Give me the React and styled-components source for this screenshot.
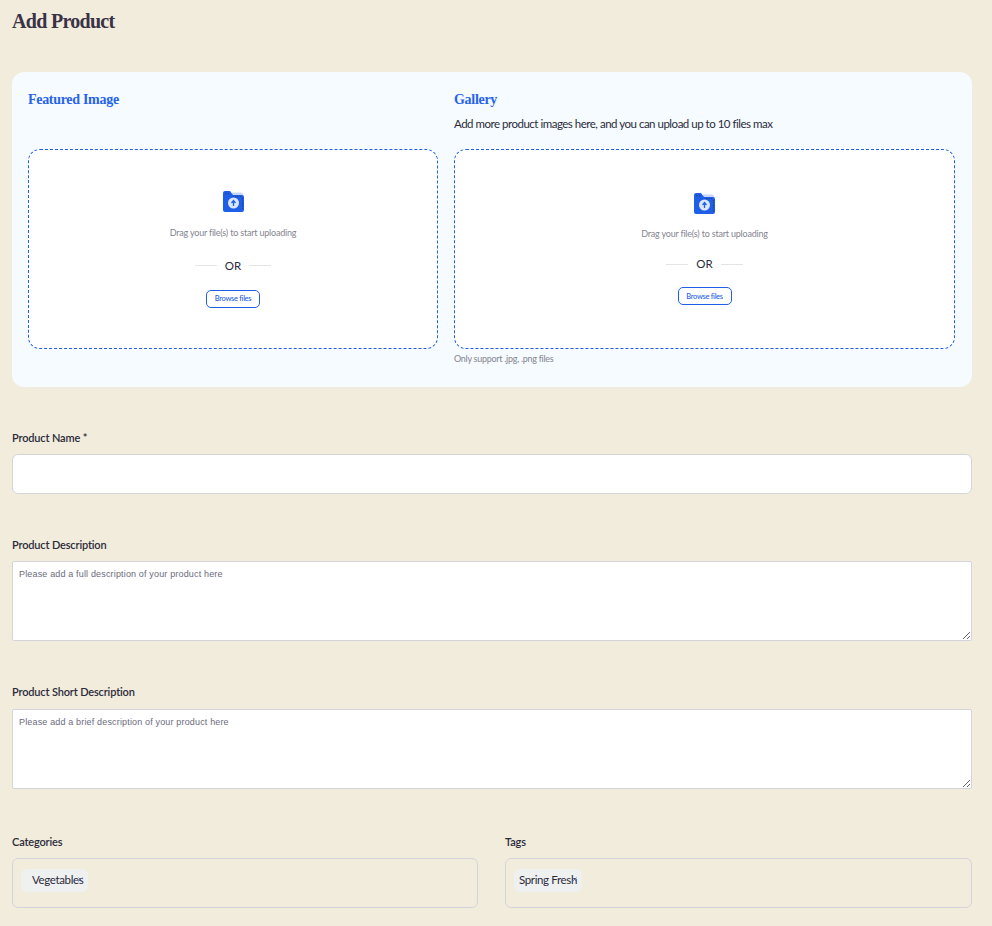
import React from "react";
import styled, { createGlobalStyle } from "styled-components";

const GlobalStyle = createGlobalStyle`
  * { box-sizing: border-box; }
  body {
    margin: 0;
    background: #f2ecdc;
    font-family: "Lato", "Liberation Sans", sans-serif;
    color: #2b2b3b;
  }
`;

const Page = styled.div`
  padding: 9px 20px 18px 12px;
  height: 926px;
  overflow: hidden;
`;

const Title = styled.h1`
  margin: 0 0 39px;
  height: 24px;
  font-family: "Liberation Serif", serif;
  font-size: 20px;
  line-height: 24px;
  font-weight: 700;
  letter-spacing: -0.7px;
  color: #3a3346;
`;

const UploadCard = styled.section`
  display: grid;
  grid-template-columns: 410px 501px;
  column-gap: 16px;
  height: 315px;
  padding: 18px 16px;
  border-radius: 12px;
  background: #f5fbff;
`;

const Column = styled.div`
  display: flex;
  flex-direction: column;
`;

const CardTitle = styled.h2`
  margin: 0;
  height: 19px;
  font-family: "Liberation Serif", serif;
  font-size: 14px;
  line-height: 19px;
  font-weight: 700;
  letter-spacing: -0.3px;
  color: #2563eb;
`;

const CardHint = styled.p`
  margin: 6px 0 0;
  height: 18px;
  font-size: 11.5px;
  line-height: 18px;
  letter-spacing: -0.49px;
  color: #2b2b3b;
`;

const DropZone = styled.div`
  display: flex;
  flex-direction: column;
  align-items: center;
  justify-content: center;
  height: 200px;
  margin-top: ${({ $hasHint }) => ($hasHint ? "16px" : "40px")};
  border: 1px dashed #1f5fe8;
  border-radius: 12px;
  background: #fff;
`;

const DropText = styled.p`
  margin: ${({ $tight }) => ($tight ? "14px" : "15px")} 0 0;
  font-size: 9px;
  line-height: 12px;
  letter-spacing: -0.2px;
  color: #85858f;
`;

const OrRow = styled.div`
  display: flex;
  align-items: center;
  gap: 8px;
  margin-top: ${({ $tight }) => ($tight ? "17px" : "20px")};
  font-size: 11.5px;
  line-height: 14px;
  color: #2b2b3b;

  &::before,
  &::after {
    content: "";
    width: 22px;
    height: 1px;
    background: #e4e4e7;
  }
`;

const BrowseButton = styled.button`
  height: 18px;
  width: 54px;
  margin-top: ${({ $tight }) => ($tight ? "16px" : "17px")};
  padding: 0;
  border: 1px solid #1f5fe8;
  border-radius: 5px;
  background: #fff;
  font-family: inherit;
  font-size: 7.5px;
  font-weight: 500;
  letter-spacing: -0.3px;
  color: #1f5fe8;
`;

const FootNote = styled.p`
  margin: 4px 0 0;
  font-size: 9px;
  line-height: 12px;
  letter-spacing: -0.28px;
  color: #85858f;
`;

const Field = styled.div`
  margin-top: ${({ $top }) => $top || 0}px;
`;

const Label = styled.label`
  display: block;
  height: 16px;
  margin-bottom: ${({ $gap }) => $gap || 8}px;
  font-size: 11px;
  line-height: 16px;
  font-weight: 600;
  letter-spacing: -0.16px;
  color: #2b2b3b;
`;

const TextInput = styled.input`
  display: block;
  width: 100%;
  height: 40px;
  border: 1px solid #d4d4dc;
  border-radius: 6px;
  background: #fff;
`;

const TextArea = styled.textarea`
  display: block;
  width: 100%;
  height: 80px;
  padding: 7px 6px;
  border: 1px solid #d4d4dc;
  border-radius: 2px;
  background: #fff;
  font-family: "Liberation Sans", sans-serif;
  font-size: 9px;
  letter-spacing: 0.16px;

  &::placeholder {
    color: #6b6b7d;
    opacity: 1;
  }
`;

const TwoFields = styled.div`
  display: grid;
  grid-template-columns: 466px 467px;
  column-gap: 27px;
  margin-top: 45px;
`;

const ChipBox = styled.div`
  height: 50px;
  padding: 9px 8px;
  border: 1px solid #d4d4dc;
  border-radius: 6px;
`;

const Chip = styled.span`
  position: relative;
  display: inline-block;
  height: 23px;
  padding: 0 5px 0 ${({ $lead }) => $lead}px;
  border-radius: 6px;
  background: #eff1f1;
  font-size: 11.5px;
  line-height: 21px;
  letter-spacing: -0.36px;
  color: #2b2b3b;
`;

const ChipRemove = styled.svg`
  position: absolute;
  right: 5px;
  top: 8px;
  width: 5px;
  height: 5px;
`;

const FolderIcon = () => (
  <svg width="21" height="21" viewBox="0 0 21 21" aria-hidden="true">
    <defs>
      <pattern id="folderDots" width="2.4" height="2.4" patternUnits="userSpaceOnUse">
        <rect width="1" height="1" fill="#17305f" />
      </pattern>
    </defs>
    <path d="M9 1.5h9a2 2 0 0 1 2 2V7H9z" fill="#c9d6fb" />
    <path d="M0 2a2 2 0 0 1 2-2h5l3 4h9a2 2 0 0 1 2 2v13a2 2 0 0 1-2 2H2a2 2 0 0 1-2-2z" fill="#1f5fe8" />
    <rect x="2" y="1" width="5" height="3" fill="url(#folderDots)" />
    <rect x="10" y="4.5" width="9" height="2" fill="url(#folderDots)" />
    <rect x="18.5" y="6" width="2" height="12" fill="url(#folderDots)" />
    <circle cx="10.5" cy="12" r="5.5" fill="#dbe6fd" />
    <path d="M10.5 15v-5M8.5 12l2-2.4 2 2.4" fill="none" stroke="#1f5fe8" strokeWidth="1.3" />
  </svg>
);

const RemoveMark = () => (
  <ChipRemove viewBox="0 0 5 5" aria-hidden="true">
    <path d="M.5.5l4 4M4.5.5l-4 4" fill="none" stroke="#4f66a8" strokeWidth=".8" />
  </ChipRemove>
);

const Upload = ({ tight }) => (
  <>
    <FolderIcon />
    <DropText $tight={tight}>Drag your file(s) to start uploading</DropText>
    <OrRow $tight={tight}>OR</OrRow>
    <BrowseButton $tight={tight}>Browse files</BrowseButton>
  </>
);

export default function App() {
  return (
    <Page>
      <GlobalStyle />
      <Title>Add Product</Title>
      <UploadCard>
        <Column>
          <CardTitle>Featured Image</CardTitle>
          <DropZone>
            <Upload />
          </DropZone>
        </Column>
        <Column>
          <CardTitle>Gallery</CardTitle>
          <CardHint>Add more product images here, and you can upload up to 10 files max</CardHint>
          <DropZone $hasHint>
            <Upload tight />
          </DropZone>
          <FootNote>Only support .jpg, .png files</FootNote>
        </Column>
      </UploadCard>
      <Field $top={43}>
        <Label>Product Name *</Label>
        <TextInput />
      </Field>
      <Field $top={43}>
        <Label>Product Description</Label>
        <TextArea placeholder="Please add a full description of your product here" />
      </Field>
      <Field $top={43}>
        <Label $gap={9}>Product Short Description</Label>
        <TextArea placeholder="Please add a brief description of your product here" />
      </Field>
      <TwoFields>
        <Field>
          <Label>Categories</Label>
          <ChipBox>
            <Chip $lead={11}>
              Vegetables
              <RemoveMark />
            </Chip>
          </ChipBox>
        </Field>
        <Field>
          <Label>Tags</Label>
          <ChipBox>
            <Chip $lead={5}>
              Spring Fresh
              <RemoveMark />
            </Chip>
          </ChipBox>
        </Field>
      </TwoFields>
    </Page>
  );
}
